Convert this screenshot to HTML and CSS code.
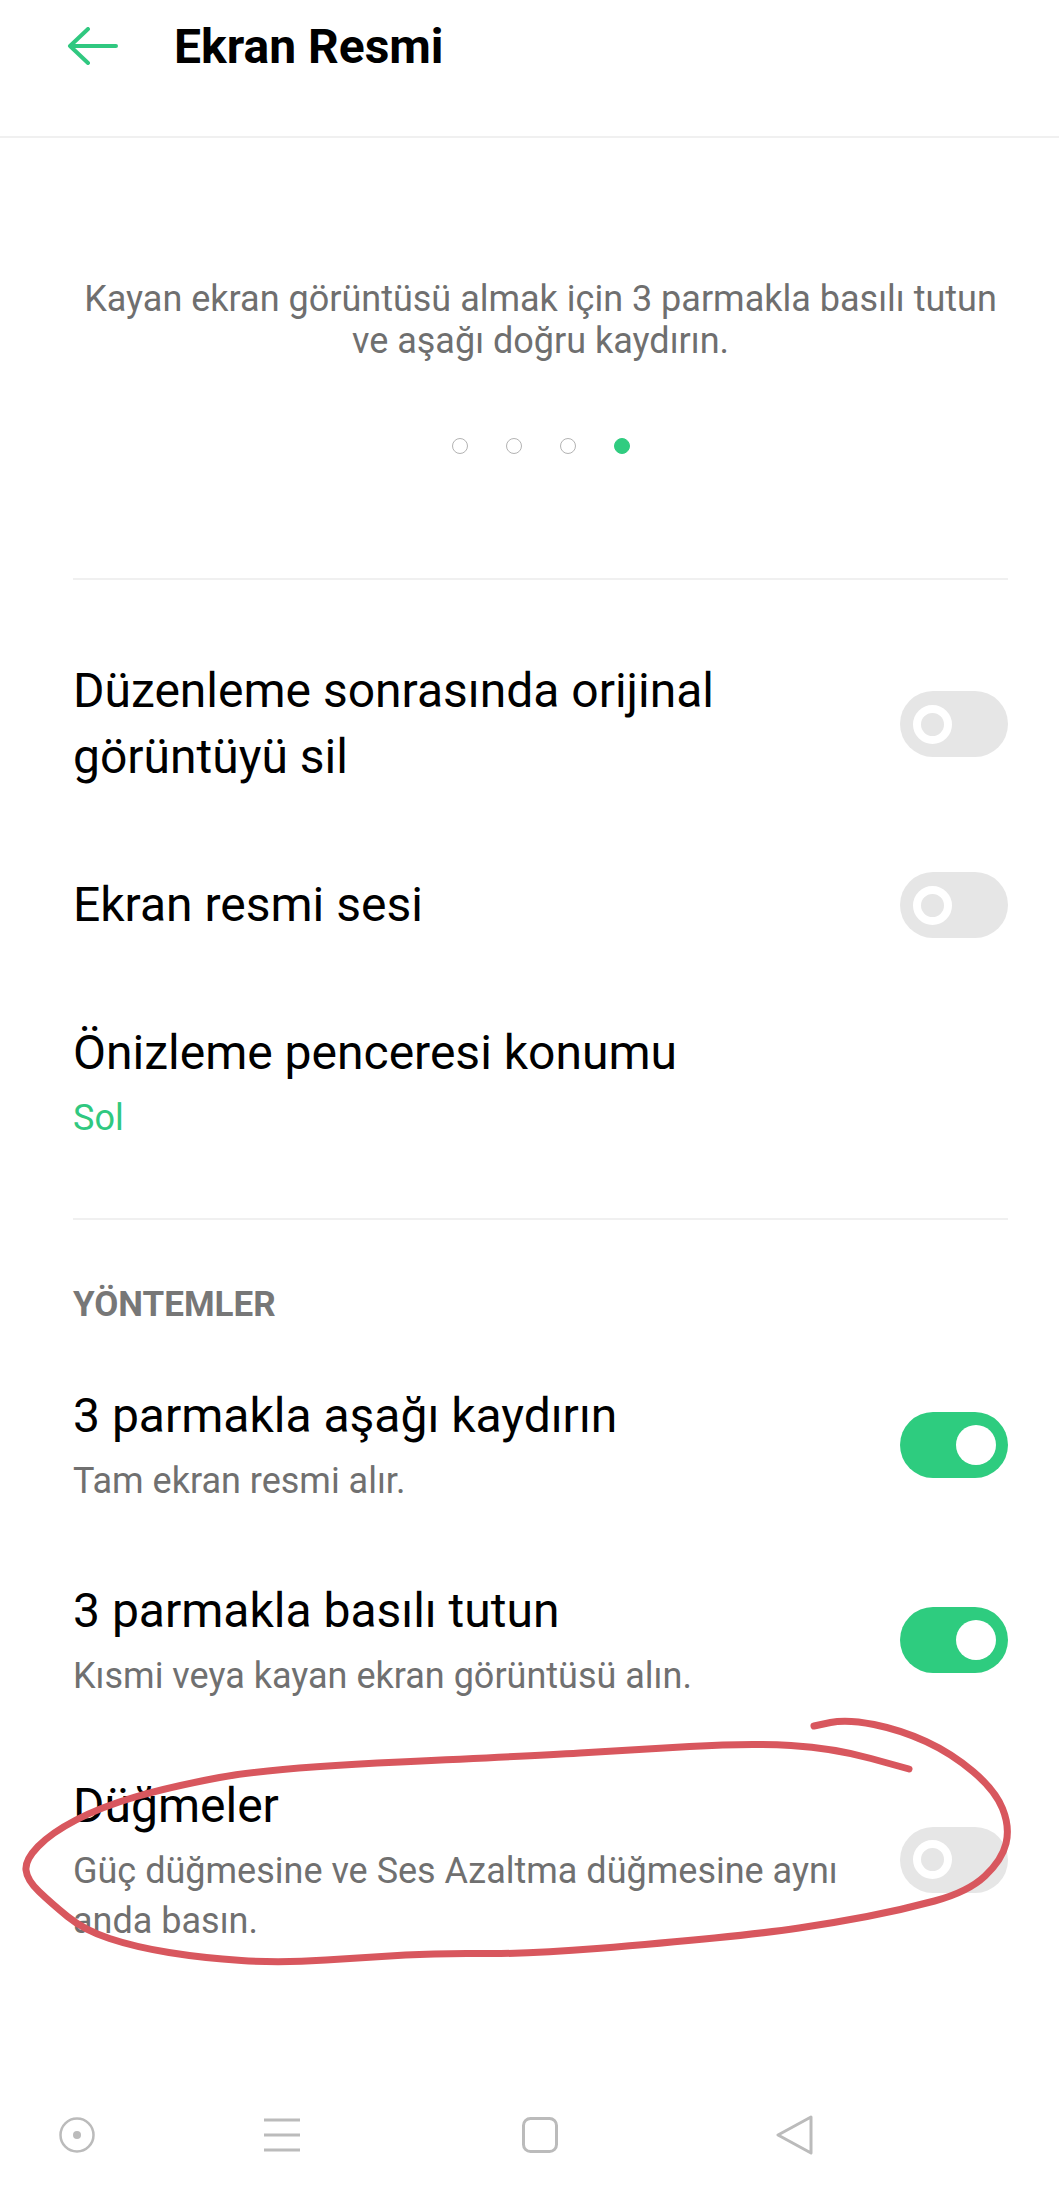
FILE: index.html
```html
<!DOCTYPE html>
<html lang="tr">
<head>
    <meta charset="UTF-8">
    <meta name="viewport" content="width=device-width, initial-scale=1.0">
    <title>Ekran Resmi</title>
    <link rel="stylesheet" href="styles.css">
</head>
<body>

    <header class="topbar">
        <svg class="back" viewBox="0 0 52 38" width="52" height="38">
            <path d="M50 19H4M22 2L4 19L22 36" fill="none" stroke="#30c880" stroke-width="4" stroke-linecap="round" stroke-linejoin="round"/>
        </svg>
        <h1 class="title">Ekran Resmi</h1>
    </header>

    <main class="content">
        <!-- Gesture hint -->
        <section class="intro">
            <p class="intro-text">Kayan ekran görüntüsü almak için 3 parmakla basılı tutun ve aşağı doğru kaydırın.</p>
            <div class="dots">
                <span class="dot"></span>
                <span class="dot"></span>
                <span class="dot"></span>
                <span class="dot active"></span>
            </div>
        </section>

        <hr class="divider">

        <ul class="list list-general">
            <li class="row">
                <div class="row-text">
                    <div class="row-title">Düzenleme sonrasında orijinal görüntüyü sil</div>
                </div>
                <span class="switch"><span class="knob"></span></span>
            </li>
            <li class="row">
                <div class="row-text">
                    <div class="row-title">Ekran resmi sesi</div>
                </div>
                <span class="switch"><span class="knob"></span></span>
            </li>
            <li class="row">
                <div class="row-text">
                    <div class="row-title">Önizleme penceresi konumu</div>
                    <div class="row-value">Sol</div>
                </div>
            </li>
        </ul>

        <hr class="divider">

        <h2 class="section-label">YÖNTEMLER</h2>

        <ul class="list list-methods">
            <li class="row">
                <div class="row-text">
                    <div class="row-title">3 parmakla aşağı kaydırın</div>
                    <div class="row-sub">Tam ekran resmi alır.</div>
                </div>
                <span class="switch on"><span class="knob"></span></span>
            </li>
            <li class="row">
                <div class="row-text">
                    <div class="row-title">3 parmakla basılı tutun</div>
                    <div class="row-sub">Kısmi veya kayan ekran görüntüsü alın.</div>
                </div>
                <span class="switch on"><span class="knob"></span></span>
            </li>
            <li class="row">
                <div class="row-text">
                    <div class="row-title">Düğmeler</div>
                    <div class="row-sub">Güç düğmesine ve Ses Azaltma düğmesine aynı anda basın.</div>
                </div>
                <span class="switch"><span class="knob"></span></span>
            </li>
        </ul>
    </main>

    <!-- System navigation -->
    <nav class="navbar">
        <svg class="nav-icon nav-assist" viewBox="0 0 36 36" width="36" height="36">
            <circle cx="18" cy="18" r="16.5" fill="none" stroke="#bbbbbb" stroke-width="2.5"/>
            <circle cx="18" cy="18" r="4" fill="#bbbbbb"/>
        </svg>
        <svg class="nav-icon nav-menu" viewBox="0 0 36 36" width="36" height="36">
            <path d="M0 3H36M0 18H36M0 33H36" stroke="#bbbbbb" stroke-width="3"/>
        </svg>
        <svg class="nav-icon nav-home" viewBox="0 0 36 36" width="36" height="36">
            <rect x="1.5" y="1.5" width="33" height="33" rx="7" fill="none" stroke="#bbbbbb" stroke-width="3"/>
        </svg>
        <svg class="nav-icon nav-back" viewBox="0 0 38 40" width="38" height="40">
            <path d="M35 2L2 20L35 38Z" fill="none" stroke="#bbbbbb" stroke-width="3" stroke-linejoin="round"/>
        </svg>
    </nav>

    <!-- Hand-drawn marker over the screenshot -->
    <svg class="annotation" viewBox="0 0 1059 2201" width="1059" height="2201">
        <path d="M814,1726 L830.5,1722.5 Q847,1719 874,1724.5 Q901,1730 926,1741.5 Q951,1753 973,1771.5 Q995,1790 1002.5,1808.5 Q1010,1827 1006,1843.5 Q1002,1860 985,1876 Q968,1892 934.5,1901 Q901,1910 867,1916.5 Q833,1923 799,1928 Q765,1933 714.5,1938 Q664,1943 597,1948.5 Q530,1954 484.5,1953.5 Q439,1953 405.5,1955 Q372,1957 326,1960 Q280,1963 241.5,1960.5 Q203,1958 169,1952.5 Q135,1947 109.5,1938.5 Q84,1930 67.5,1916.5 Q51,1903 39,1891.5 Q27,1880 26,1870 Q25,1860 38,1846.5 Q51,1833 76,1820 Q101,1807 135,1797 Q169,1787 219.5,1777.5 Q270,1768 400,1762 Q530,1756 580,1753 Q630,1750 689.5,1746.5 Q749,1743 791,1745.5 Q833,1748 871,1758.5 L909,1769"
              fill="none" stroke="#d8575e" stroke-width="7" stroke-linecap="round" stroke-linejoin="round"/>
    </svg>

</body>
</html>
```

FILE: styles.css
```css
body {
    margin: 0;
    min-height: 2201px;
    display: flex;
    flex-direction: column;
    position: relative;
    font-family: Roboto, 'Noto Sans', sans-serif;
    background: #fff;
    color: #000;
}

.topbar {
    display: flex;
    align-items: flex-start;
    height: 118px;
    padding: 18px 0 0 66px;
    border-bottom: 2px solid #f0f0f0;
}

.back {
    margin-top: 9px;
    flex-shrink: 0;
}

.title {
    margin: 0 0 0 56px;
    font-size: 48px;
    font-weight: 700;
    line-height: 57px;
}

.content {
    padding: 0 51px 0 73px;
}

.intro {
    padding: 140px 0 124px;
    text-align: center;
}

.intro-text {
    margin: 0;
    font-size: 36px;
    line-height: 42px;
    color: #6f6f6f;
}

.dots {
    display: flex;
    justify-content: center;
    gap: 38px;
    margin-top: 76px;
}

.dot {
    width: 16px;
    height: 16px;
    box-sizing: border-box;
    border: 1.5px solid #b3b3b3;
    border-radius: 50%;
}

.dot.active {
    background: #30cc80;
    border-color: #30cc80;
}

.divider {
    height: 2px;
    margin: 0;
    border: none;
    background: #f0f0f0;
}

.list {
    list-style: none;
    margin: 0;
    padding: 0;
}

.list-general {
    padding: 38px 0 33px;
}

.row {
    display: flex;
    align-items: center;
    justify-content: space-between;
    gap: 40px;
    padding: 40px 0 42px;
}

.list-methods .row {
    padding: 36px 0;
}

.row-text {
    flex: 1;
}

.row-title {
    font-size: 48px;
    line-height: 66px;
}

.row-sub,
.row-value {
    margin-top: 7px;
    font-size: 36px;
    line-height: 50px;
    color: #707070;
}

.row-value {
    color: #30c880;
}

.section-label {
    margin: 63px 0 20px;
    font-size: 35px;
    line-height: 44px;
    font-weight: 700;
    color: #777;
}

.switch {
    flex-shrink: 0;
    display: flex;
    align-items: center;
    width: 108px;
    height: 66px;
    box-sizing: border-box;
    padding: 0 12px 0 13px;
    border-radius: 33px;
    background: #e6e6e6;
}

.knob {
    width: 39px;
    height: 39px;
    box-sizing: border-box;
    border: 8.5px solid #fff;
    border-radius: 50%;
}

.switch.on {
    justify-content: flex-end;
    background: #2ecc7f;
}

.switch.on .knob {
    width: 40px;
    height: 40px;
    border: none;
    background: #fff;
}

.navbar {
    margin-top: auto;
    height: 132px;
    display: flex;
    align-items: center;
    padding-left: 59px;
}

.nav-menu {
    margin-left: 169px;
}

.nav-home {
    margin-left: 222px;
}

.nav-back {
    margin-left: 218px;
}

.annotation {
    position: absolute;
    top: 0;
    left: 0;
    pointer-events: none;
}
```
